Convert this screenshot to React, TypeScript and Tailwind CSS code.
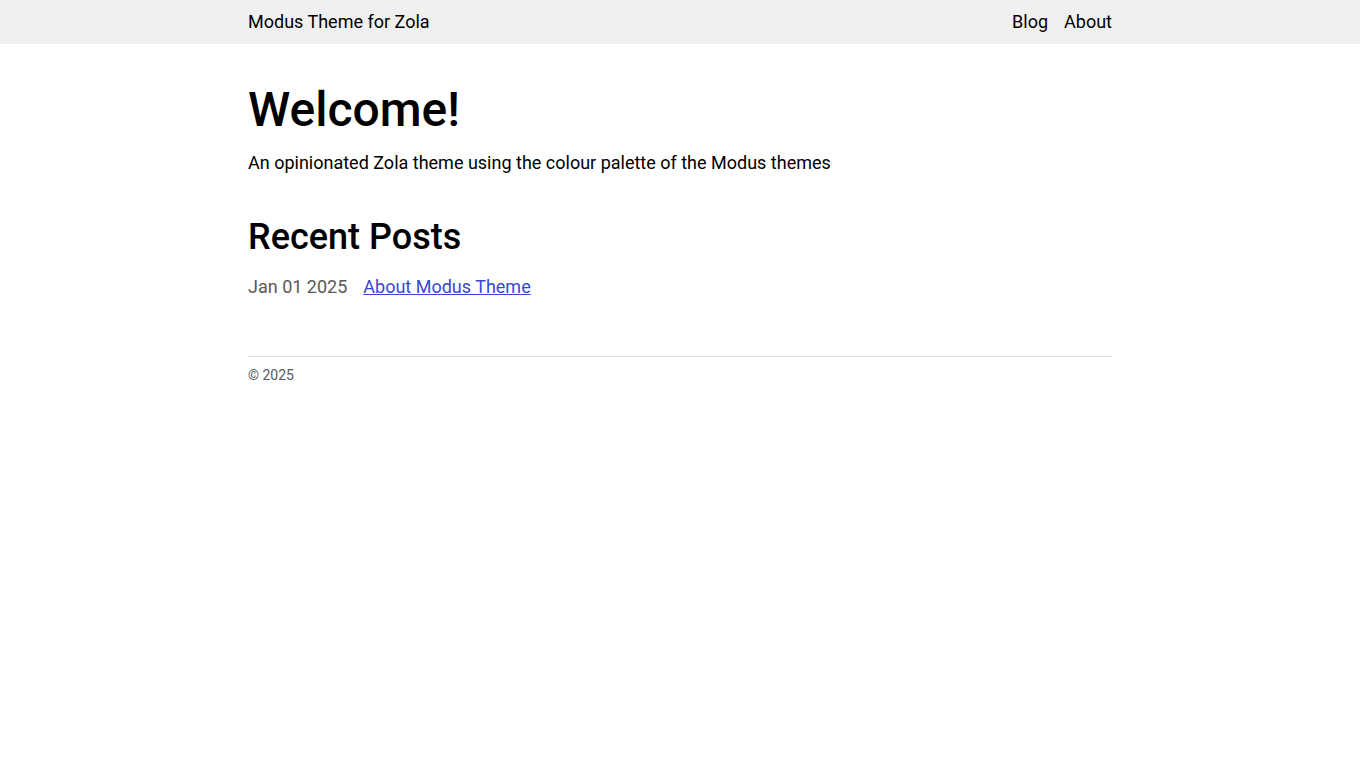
import React from 'react';

const posts = [{ date: 'Jan 01 2025', title: 'About Modus Theme' }];

export default function App() {
  return (
    <div className="min-h-screen bg-white text-black font-['Roboto',sans-serif]">
      <header className="bg-[#f0f0f0] h-[44px]">
        <div className="max-w-[864px] mx-auto h-full flex items-center justify-between text-[18px] pb-[2px]">
          <a href="#" className="text-black">Modus Theme for Zola</a>
          <nav className="flex gap-4">
            <a href="#">Blog</a>
            <a href="#">About</a>
          </nav>
        </div>
      </header>

      <main className="max-w-[864px] mx-auto pt-[42px]">
        <h1 className="text-[48px] font-medium leading-none">Welcome!</h1>
        <p className="text-[18px] mt-[15px]">An opinionated Zola theme using the colour palette of the Modus themes</p>

        <h2 className="text-[36px] font-medium leading-none mt-[43px]">Recent Posts</h2>
        <ul className="mt-[18px]">
          {posts.map((p) => (
            <li key={p.title} className="flex gap-4 text-[18px]">
              <span className="text-[#595959]">{p.date}</span>
              <a href="#" className="text-[#3548cf] underline">{p.title}</a>
            </li>
          ))}
        </ul>
      </main>

      <footer className="max-w-[864px] mx-auto mt-[56px] border-t border-[#dfdfdf] pt-[8px] text-[14px] text-[#595959]">
        © 2025
      </footer>
    </div>
  );
}
